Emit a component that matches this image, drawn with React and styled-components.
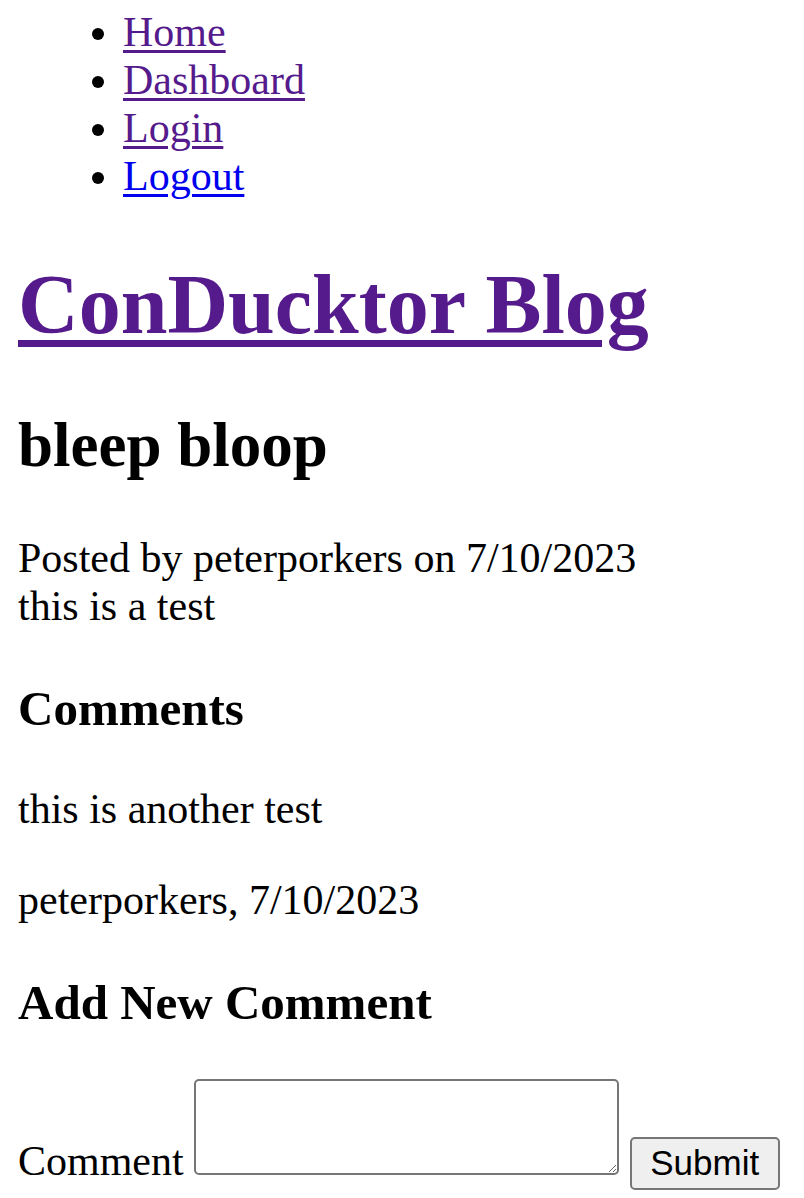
import React from "react";
import styled, { createGlobalStyle } from "styled-components";

const Global = createGlobalStyle`
  html, body { margin: 0; padding: 0; background: #fff; }
  body {
    font-family: "Liberation Serif", "Times New Roman", serif;
    font-size: 42px;
    color: #000;
  }
`;

const Page = styled.div`
  padding: 8px 18px 0 18px;
`;

const NavList = styled.ul`
  margin: 0 0 42px 0;
  padding: 0 0 0 105px;
  list-style: disc;
`;

const NavItem = styled.li`
  line-height: normal;
`;

const NavLink = styled.a`
  color: ${(p) => (p.$visited ? "#551a8b" : "#0000ee")};
  text-decoration: underline;
  text-decoration-thickness: 3px;
  text-underline-offset: 4px;
  cursor: pointer;
`;

const Title = styled.h1`
  font-size: 84px;
  font-weight: bold;
  margin: 56px 0;
`;

const TitleLink = styled.a`
  color: #551a8b;
  text-decoration: underline;
  text-decoration-thickness: 7px;
  text-underline-offset: 7px;
`;

const PostTitle = styled.h2`
  font-size: 63px;
  font-weight: bold;
  margin: 52px 0;
`;

const Paragraph = styled.p`
  margin: 43px 0;
`;

const SectionTitle = styled.h3`
  font-size: 49px;
  font-weight: bold;
  margin: 50px 0 48px 0;
`;

const FormRow = styled.form`
  margin: 47px 0 0 0;
  padding-bottom: 8px;
`;

const Label = styled.label``;

const TextArea = styled.textarea`
  box-sizing: border-box;
  width: 425px;
  height: 96px;
  margin: 0;
  padding: 5px;
  border: 2px solid #767676;
  border-radius: 5px;
  font-family: "Liberation Mono", monospace;
  font-size: 35px;
  vertical-align: baseline;
  background: #fff;
`;

const SubmitButton = styled.button`
  box-sizing: border-box;
  width: 150px;
  height: 53px;
  margin: 0;
  padding: 0 18px;
  font-family: "Liberation Sans", Arial, sans-serif;
  font-size: 35px;
  color: #000;
  background: #efefef;
  border: 2px solid #767676;
  border-radius: 5px;
  vertical-align: baseline;
`;

export default function App() {
  return (
    <>
      <Global />
      <Page>
        <nav>
          <NavList>
            <NavItem><NavLink $visited>Home</NavLink></NavItem>
            <NavItem><NavLink $visited>Dashboard</NavLink></NavItem>
            <NavItem><NavLink $visited>Login</NavLink></NavItem>
            <NavItem><NavLink>Logout</NavLink></NavItem>
          </NavList>
        </nav>
        <Title><TitleLink>ConDucktor Blog</TitleLink></Title>
        <PostTitle>bleep bloop</PostTitle>
        <Paragraph>
          Posted by peterporkers on 7/10/2023
          <br />
          this is a test
        </Paragraph>
        <SectionTitle>Comments</SectionTitle>
        <Paragraph>this is another test</Paragraph>
        <Paragraph>peterporkers, 7/10/2023</Paragraph>
        <SectionTitle>Add New Comment</SectionTitle>
        <FormRow onSubmit={(e) => e.preventDefault()}>
          <Label htmlFor="comment">Comment</Label>{" "}
          <TextArea id="comment" />{" "}
          <SubmitButton type="submit">Submit</SubmitButton>
        </FormRow>
      </Page>
    </>
  );
}
